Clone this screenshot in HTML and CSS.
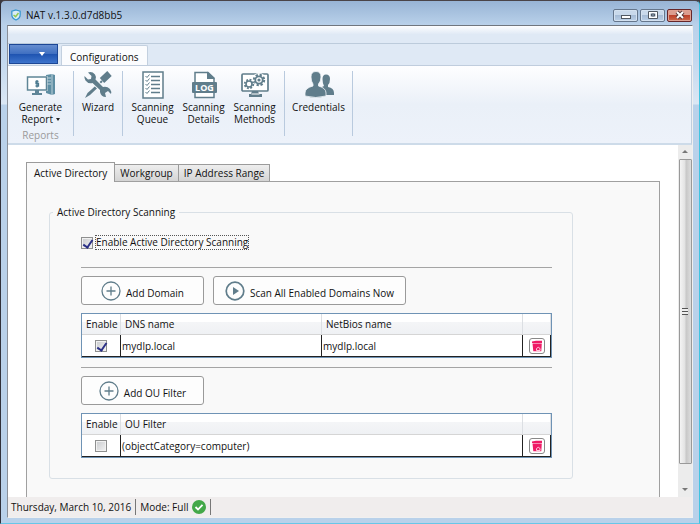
FILE: index.html
```html
<!DOCTYPE html>
<html lang="en">
<head>
    <meta charset="UTF-8">
    <meta name="viewport" content="width=device-width, initial-scale=1.0">
    <title>NAT v.1.3.0.d7d8bb5</title>
    <link rel="stylesheet" href="styles.css">
</head>
<body>
<div class="window">
    <header class="titlebar">
        <svg class="logo" viewBox="0 0 12 14"><path d="M6 1 L11 2.500 V7 Q11 11 6 13 Q1 11 1 7 V2.500 Z" fill="#d9ecf5" stroke="#3596cf" stroke-width="1.500"/><path d="M3 7 L5.500 9 L9 4.500" fill="none" stroke="#8fc952" stroke-width="1.800"/></svg>
        <h1>NAT v.1.3.0.d7d8bb5</h1>
        <div class="win-buttons">
            <button aria-label="Minimize"><svg viewBox="0 0 12 10"><rect x="1.500" y="5.500" width="9" height="3" fill="#fff" stroke="#505862"/></svg></button>
            <button aria-label="Maximize"><svg viewBox="0 0 12 10"><rect x="2.500" y="2.500" width="7" height="5" fill="#8fa6c0" stroke="#fff" stroke-width="2"/><path d="M1.500 1.500 H10.500 V8.500 H1.500 Z M4.500 4 H7.500 V6 H4.500 Z" fill="none" stroke="#505862"/></svg></button>
            <button class="close" aria-label="Close"><svg viewBox="0 0 12 10"><path d="M3 2 L9 8 M9 2 L3 8" stroke="#5c3a3a" stroke-width="4"/><path d="M3 2 L9 8 M9 2 L3 8" stroke="#fff" stroke-width="2"/></svg></button>
        </div>
    </header>

    <div class="client">
        <div class="quickbar"></div>
        <nav class="ribbon-tabs">
            <button class="app-menu" aria-label="Menu"><span class="arrow"></span></button>
            <button class="ribbon-tab">Configurations</button>
        </nav>

        <div class="ribbon">
            <div class="group report">
                <button class="tool">
                    <svg viewBox="0 0 30 28"><path d="M20 4 L26 3 L29 4 V23 L26 24 L20 22 Z" fill="#5e8ea3"/><path d="M21 7 H25 M21 10 H25 M21 13 H25 M26 3 V24" stroke="#bcd2db"/><rect x="0.500" y="5" width="21" height="15" fill="#fff"/><rect x="1.500" y="6" width="19" height="13" fill="#fff" stroke="#5e8597" stroke-width="1.500"/><path d="M9 19 H13 V22 H16 V24 H6 V22 H9 Z" fill="#5e8597"/><path d="M12.500 10.500 H10 V12.500 H12.500 V15 H9.500 M11 9 V16.500" fill="none" stroke="#4d7b90" stroke-width="1.300"/></svg>
                    <span>Generate<br>Report <i class="caret"></i></span>
                </button>
                <p>Reports</p>
            </div>
            <div class="group wizard">
                <button class="tool">
                    <svg viewBox="0 0 30 28"><path d="M2 27 L4.500 22 L14 13.500 L16 15.500 L7 24 Z" fill="#607d8b"/><path d="M14 15 L19 10" stroke="#607d8b" stroke-width="2"/><path d="M19 9.500 L26.500 2.500" stroke="#607d8b" stroke-width="6.500"/><path d="M8 7 L22 21" stroke="#f5f8fb" stroke-width="6.500"/><path d="M1.500 5 L5 8.500 L8 8 L8.500 5 L5 1.500 Q9 0 12 3.500 Q13.500 5.500 12.500 8.500 L20 16 Q24 15 27 18 Q29 21 28 23 L25 20 L22 22 L23 26 Q18 26 17 21 L17 19 L9.500 12 Q5 13 2.500 9.500 Q1 7.500 1.500 5 Z" fill="#607d8b"/></svg>
                    <span>Wizard</span>
                </button>
            </div>
            <div class="group scanning">
                <button class="tool">
                    <svg viewBox="0 0 30 28"><rect x="5" y="1" width="20" height="26" fill="#fff" stroke="#607d8b" stroke-width="1.500"/><path d="M13 5.500 H22 M13 9.500 H22 M13 13.500 H22 M13 17.500 H22 M13 21.500 H22" stroke="#607d8b" stroke-width="1.300"/><path d="M7.500 5 L9 6.500 L11.500 3.500 M7.500 9 L9 10.500 L11.500 7.500 M7.500 13 L9 14.500 L11.500 11.500 M7.500 17 L9 18.500 L11.500 15.500 M7.500 21 L9 22.500 L11.500 19.500" fill="none" stroke="#607d8b"/></svg>
                    <span>Scanning<br>Queue</span>
                </button>
                <button class="tool">
                    <svg viewBox="0 0 30 28"><path d="M6 26.500 V1.500 H19 L25 7 V26.500 Z" fill="#fff" stroke="#607d8b" stroke-width="1.500"/><path d="M18 0.500 L26 8 H18 Z" fill="#607d8b"/><rect x="3" y="11" width="25" height="11" rx="1" fill="#607d8b"/><text class="log" x="15.500" y="20" text-anchor="middle">LOG</text></svg>
                    <span>Scanning<br>Details</span>
                </button>
                <button class="tool">
                    <svg viewBox="0 0 30 28"><rect x="2" y="3" width="26" height="17" rx="1" fill="#fff" stroke="#607d8b" stroke-width="1.700"/><path d="M12 20 H18 L19 23 H22 V26 H9 V23 H11 Z" fill="#607d8b"/><rect x="11.500" y="22.500" width="8" height="1" fill="#fff"/><circle cx="19" cy="9" r="7" fill="#fff"/><circle cx="19" cy="9" r="5.200" fill="none" stroke="#607d8b" stroke-width="2" stroke-dasharray="2.300 1.780"/><circle cx="19" cy="9" r="3.700" fill="none" stroke="#607d8b" stroke-width="1.800"/><circle cx="19" cy="9" r="1.600" fill="#607d8b"/><circle cx="9" cy="13" r="5.500" fill="#fff"/><circle cx="9" cy="13" r="4.300" fill="none" stroke="#607d8b" stroke-width="1.800" stroke-dasharray="1.900 1.480"/><circle cx="9" cy="13" r="3" fill="none" stroke="#607d8b" stroke-width="1.600"/></svg>
                    <span>Scanning<br>Methods</span>
                </button>
            </div>
            <div class="group credentials">
                <button class="tool">
                    <svg viewBox="0 0 30 28"><path d="M22 3.500 Q26 3.500 26 8 Q26 12 24 14 V16 Q30 17 30 22 V24 H18 V16 L20 15 Q18.500 12 18.500 8 Q18.500 3.500 22 3.500 Z" fill="#607d8b"/><path d="M12 0.500 Q17 0.500 17 6 Q17 10.500 14.500 13 V15 Q22 17 22 22 V25 Q12 28 1 25 V22 Q1 17 9 15 V13 Q7 10.500 7 6 Q7 0.500 12 0.500 Z" fill="#607d8b" stroke="#f3f6fa" stroke-width="0.800"/></svg>
                    <span>Credentials</span>
                </button>
            </div>
        </div>

        <main class="content">
            <div class="page">
                <div class="tabs" role="tablist">
                    <button class="tab active" role="tab" aria-selected="true">Active Directory</button>
                    <button class="tab" role="tab">Workgroup</button>
                    <button class="tab" role="tab">IP Address Range</button>
                </div>
                <div class="panel">
                    <fieldset>
                        <legend>Active Directory Scanning</legend>
                        <div class="enable">
                            <input type="checkbox" id="enableScan" checked>
                            <label for="enableScan">Enable Active Directory Scanning</label>
                        </div>
                        <hr>
                        <div class="actions">
                            <button class="action"><svg viewBox="0 0 20 20"><circle cx="10" cy="10" r="9" fill="none" stroke="#607d8b" stroke-width="1.300"/><path d="M10 5.500 V14.500 M5.500 10 H14.500" stroke="#607d8b" stroke-width="1.300"/></svg><span>Add Domain</span></button>
                            <button class="action scan"><svg viewBox="0 0 20 20"><circle cx="10" cy="10" r="8.800" fill="none" stroke="#607d8b" stroke-width="1.700"/><path d="M8 6 L14 10 L8 14 Z" fill="#607d8b"/></svg><span>Scan All Enabled Domains Now</span></button>
                        </div>
                        <table>
                            <thead>
                                <tr><th class="col-enable">Enable</th><th>DNS name</th><th>NetBios name</th><th class="col-delete"></th></tr>
                            </thead>
                            <tbody>
                                <tr>
                                    <td class="center"><input type="checkbox" aria-label="Enable mydlp.local" checked></td>
                                    <td>mydlp.local</td>
                                    <td>mydlp.local</td>
                                    <td class="center"><button class="delete" aria-label="Delete domain"><svg viewBox="0 0 12 12"><path d="M1 1.500 L5 0.800 H11 V3 H1 Z M1.500 3.500 H10.800 L10.300 11.300 H2.300 Z" fill="#ee1c67"/><path d="M5.500 10.500 V8.500 Q7.200 6 9 8.500 V10.500 Z" fill="none" stroke="#ffc9dc"/></svg></button></td>
                                </tr>
                            </tbody>
                        </table>
                        <hr>
                        <div class="actions">
                            <button class="action"><svg viewBox="0 0 20 20"><circle cx="10" cy="10" r="9" fill="none" stroke="#607d8b" stroke-width="1.300"/><path d="M10 5.500 V14.500 M5.500 10 H14.500" stroke="#607d8b" stroke-width="1.300"/></svg><span>Add OU Filter</span></button>
                        </div>
                        <table>
                            <thead>
                                <tr><th class="col-enable">Enable</th><th>OU Filter</th><th class="col-delete"></th></tr>
                            </thead>
                            <tbody>
                                <tr>
                                    <td class="center"><input type="checkbox" aria-label="Enable OU filter"></td>
                                    <td>(objectCategory=computer)</td>
                                    <td class="center"><button class="delete" aria-label="Delete filter"><svg viewBox="0 0 12 12"><path d="M1 1.500 L5 0.800 H11 V3 H1 Z M1.500 3.500 H10.800 L10.300 11.300 H2.300 Z" fill="#ee1c67"/><path d="M5.500 10.500 V8.500 Q7.200 6 9 8.500 V10.500 Z" fill="none" stroke="#ffc9dc"/></svg></button></td>
                                </tr>
                            </tbody>
                        </table>
                    </fieldset>
                </div>
            </div>
            <div class="scrollbar">
                <span class="up"></span>
                <div class="thumb"><span class="grip"></span></div>
                <span class="down"></span>
            </div>
        </main>

        <footer class="statusbar">
            <span class="status">Thursday, March 10, 2016</span>
            <span class="status">Mode: Full <svg viewBox="0 0 14 14"><circle cx="7" cy="7" r="7" fill="#43a849"/><path d="M3.500 7 L6 9.500 L10.500 4.800" fill="none" stroke="#fff" stroke-width="1.800"/></svg></span>
        </footer>
    </div>
</div>
</body>
</html>
```
FILE: styles.css
```css
* {
    box-sizing: border-box;
    margin: 0;
    padding: 0;
}
body {
    font-family: "Open Sans", "Noto Sans", sans-serif;
    font-size: 10px;
    line-height: 12px;
    color: #111;
    background: #3d3a40;
}
button {
    font: inherit;
    color: inherit;
    border: none;
    background: none;
}
svg {
    display: block;
}

/* window frame */
.window {
    display: flex;
    flex-direction: column;
    height: 100vh;
    border-top: 1px solid #4a4448;
    border-left: 1px solid #30303a;
    border-right: 1px solid #40c4e0;
    border-bottom: 1px solid #67c6e8;
    border-radius: 5px 5px 0 0;
    padding: 0 6px 5px;
    background: linear-gradient(#98b4d5, #b9d1ea 24px, #c3d8ee 60px, #dbe7f4 103px, #b9d1ea 104px);
}
.titlebar {
    display: flex;
    align-items: center;
    height: 24px;
    padding: 4px 1px 0 4px;
}
.logo {
    width: 10px;
    height: 12px;
}
.titlebar h1 {
    flex: 1;
    margin-left: 5px;
    font-size: 10px;
    font-weight: normal;
}
.win-buttons {
    display: flex;
    gap: 2px;
}
.win-buttons button {
    display: flex;
    align-items: center;
    justify-content: center;
    width: 25px;
    height: 13px;
    border: 1px solid #65768c;
    border-radius: 2px;
    background: linear-gradient(#c9d9eb 45%, #a6bcd6 50%, #bbd0e8);
    box-shadow: inset 0 0 0 1px #d3e1f0;
}
.win-buttons svg {
    width: 12px;
    height: 10px;
}
.win-buttons .close {
    border-color: #66262a;
    background: linear-gradient(#dc9d8f 45%, #bd412b 50%, #cd6a4b);
    box-shadow: inset 0 0 0 1px #dfa193;
}
.client {
    display: flex;
    flex: 1;
    flex-direction: column;
    min-height: 0;
    border: 1px solid #8a8f98;
    border-top-color: #70767e;
    border-right-color: #f0f0f0;
    border-bottom-color: #f0f0f0;
    background: #dfe9f5;
}

/* ribbon */
.quickbar {
    height: 18px;
    border-bottom: 1px solid #bccbdb;
    background: linear-gradient(#fdfeff, #dfe9f5 50%);
}
.ribbon-tabs {
    display: flex;
    gap: 3px;
    height: 21px;
    padding-left: 1px;
}
.app-menu {
    display: flex;
    align-items: center;
    justify-content: flex-end;
    width: 49px;
    height: 20px;
    padding-right: 12px;
    border: 1px solid #1d4795;
    background: linear-gradient(#668ed0, #4070c1 48%, #1e53b0 50%, #3d74cc);
}
.arrow {
    border: 3px solid transparent;
    border-top: 4px solid #fff;
    border-bottom: none;
}
.ribbon-tab {
    align-self: flex-end;
    height: 20px;
    padding: 2px 8px 0;
    border: 1px solid #c3d0df;
    border-bottom: none;
    border-radius: 2px 2px 0 0;
    background: #fbfcfe;
}
.ribbon {
    display: flex;
    height: 80px;
    padding: 5px 0 7px;
    border: 1px solid #c0cddd;
    border-left: none;
    border-bottom: 2px solid #cddbe9;
    background: linear-gradient(#fefeff, #eaf0f8 50%, #edf2fa);
}
.group {
    display: flex;
    justify-content: center;
    border-right: 1px solid #b9cade;
}
.report {
    flex-direction: column;
    align-items: center;
    justify-content: flex-start;
    width: 66px;
}
.report p {
    margin-top: 4px;
    color: #9a9a9a;
}
.wizard {
    width: 49px;
}
.scanning {
    width: 162px;
}
.credentials {
    width: 68px;
}
.tool {
    display: flex;
    flex-direction: column;
    align-items: center;
    align-self: flex-start;
    width: 51px;
    line-height: 12px;
}
.report .tool {
    align-self: center;
}
.tool svg {
    width: 30px;
    height: 28px;
    margin-bottom: 2px;
}
.log {
    font: bold 9px "Open Sans", sans-serif;
    fill: #fff;
}
.caret {
    display: inline-block;
    vertical-align: 2px;
    border: 2px solid transparent;
    border-top: 3px solid #222;
    border-bottom: none;
}

/* content */
.content {
    display: flex;
    flex: 1;
    min-height: 0;
    overflow: hidden;
    background: #fff;
}
.page {
    display: flex;
    flex: 1;
    flex-direction: column;
    padding: 17px 18px 0;
}
.tabs {
    display: flex;
    align-items: flex-end;
    height: 20px;
    margin-bottom: -1px;
}
.tab {
    height: 18px;
    padding: 0 5px;
    border: 1px solid #9b9b9b;
    border-left: none;
    background: linear-gradient(#eee, #d4d4d4);
}
.tab.active {
    height: 20px;
    padding: 0 7px;
    border-left: 1px solid #9b9b9b;
    border-bottom: none;
    background: #f9f9f9;
    z-index: 1;
}
.panel {
    flex: 1;
    padding: 23px 86px 18px 22px;
    border: 1px solid #a0a0a0;
    border-bottom: none;
    background: #f9f9f9;
}
fieldset {
    padding: 16px 20px 20px 31px;
    border: 1px solid #d9e0e6;
    border-radius: 3px;
}
legend {
    margin-left: -28px;
    padding: 0 4px;
    line-height: 14px;
}
input[type="checkbox"] {
    appearance: none;
    width: 12px;
    height: 12px;
    border: 1px solid #8e8f8f;
    background: linear-gradient(135deg, #c8cacd, #f3f3f3);
    box-shadow: inset 0 0 0 1px #f1f1f1;
}
input[type="checkbox"]:checked::before {
    content: "";
    display: block;
    width: 4px;
    height: 8px;
    margin: 0 0 0 3px;
    border: solid #2b3086;
    border-width: 0 2px 2px 0;
    transform: rotate(35deg);
}
.enable {
    display: flex;
    align-items: center;
    gap: 2px;
}
.enable label {
    border: 1px dotted #555;
    line-height: 13px;
}
hr {
    border: none;
    border-top: 1px solid #a5a5a5;
}
.enable + hr {
    margin-top: 17px;
}
table + hr {
    margin-top: 9px;
}
.actions {
    display: flex;
    gap: 9px;
    margin: 8px 0;
}
.action {
    display: flex;
    align-items: center;
    justify-content: center;
    gap: 5px;
    width: 123px;
    height: 29px;
    border: 1px solid #9a9a9a;
    border-radius: 3px;
    background: #fdfdfd;
}
.action.scan {
    width: 193px;
}
.action svg {
    width: 20px;
    height: 20px;
}
.action span {
    padding-top: 5px;
}
table {
    width: 100%;
    border: 1px solid #6f93b5;
    border-collapse: separate;
    border-spacing: 0;
    table-layout: fixed;
    background: #fff;
}
th {
    height: 21px;
    padding-left: 4px;
    border-right: 1px solid #dcdfe3;
    border-bottom: 1px solid #d5d5d5;
    background: linear-gradient(#fff 40%, #f4f5f7 42%, #eff1f4);
    font-weight: normal;
    text-align: left;
}
td {
    height: 22px;
    padding-left: 1px;
    border-right: 1px solid #222;
    border-bottom: 1px solid #222;
}
.col-enable {
    width: 39px;
}
.col-delete {
    width: 28px;
}
.center {
    padding: 0;
    text-align: center;
}
.center input,
.center button {
    display: block;
    margin: 0 auto;
}
.delete {
    width: 16px;
    height: 16px;
    padding: 1px;
    border: 1px solid #888;
    border-radius: 3px;
    background: #fff;
}
.delete svg {
    width: 12px;
    height: 12px;
}

/* scrollbar */
.scrollbar {
    display: flex;
    flex-direction: column;
    align-items: center;
    width: 14px;
    background: #ececec;
}
.up,
.down {
    margin: 5px 0 6px;
    border: 3px solid transparent;
}
.up {
    border-top: none;
    border-bottom: 3px solid #777;
}
.down {
    margin: 24px 0 6px;
    border-top: 3px solid #777;
    border-bottom: none;
}
.thumb {
    display: flex;
    flex: 1;
    align-items: center;
    justify-content: center;
    width: 13px;
    border: 1px solid #999;
    border-radius: 1px;
    background: linear-gradient(to right, #f4f4f4, #e2e2e2 45%, #c7c7c7 55%, #ddd);
}
.grip {
    width: 6px;
    height: 7px;
    background: repeating-linear-gradient(#555 0 1px, #eee 1px 3px);
}

/* status bar */
.statusbar {
    display: flex;
    align-items: center;
    height: 20px;
    padding-left: 3px;
    background: #f0eded;
}
.status {
    display: flex;
    align-items: center;
    gap: 4px;
    height: 16px;
    padding-right: 4px;
    margin-right: 4px;
    border-right: 1px solid #777;
}
.status svg {
    width: 14px;
    height: 14px;
}
```
